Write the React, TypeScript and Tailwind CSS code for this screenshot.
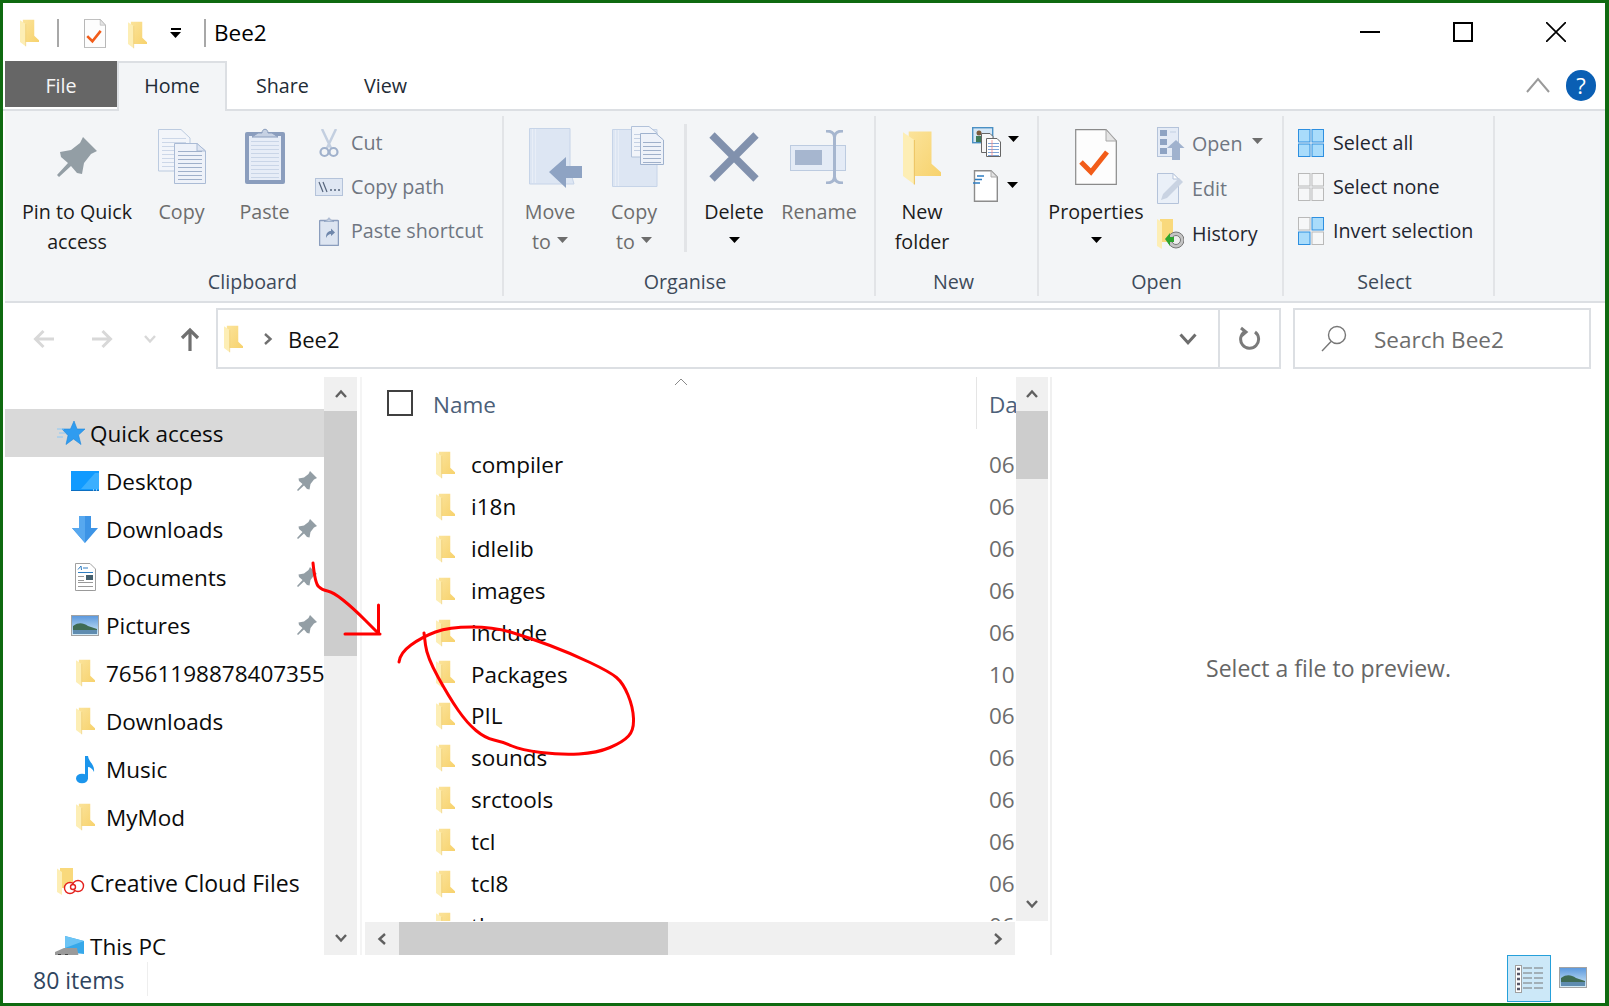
import React from "react";

const Folder = ({ w = 19, h = 28 }: { w?: number; h?: number }) => (
  <svg width={w} height={h} viewBox="0 0 20 28" className="shrink-0">
    <defs>
      <linearGradient id="fg" x1="0" y1="0" x2="1" y2="1">
        <stop offset="0" stopColor="#fbe39a" />
        <stop offset="1" stopColor="#f7d26d" />
      </linearGradient>
    </defs>
    <path d="M3 0H15V17L20 21.500V23.500H3Z" fill="url(#fg)" />
    <path d="M0 0.500L6 4.500V28L0 23.500Z" fill="#fdeeb5" />
    <path d="M6 4.500V28" stroke="#eec767" strokeWidth="0.6" />
  </svg>
);

const PinIcon = ({ s = 40 }: { s?: number }) => (
  <svg width={s} height={s} viewBox="0 0 40 40" className="shrink-0">
    <path d="M26 0L40 14L34 17L27 26L25 37L20 36L14 29L2 40L0 38L11 26L4 20L3 15L14 13L23 6Z" fill="#939ea5" />
  </svg>
);

const DocCheck = ({ w = 42, h = 56 }: { w?: number; h?: number }) => (
  <svg width={w} height={h} viewBox="0 0 42 56" className="shrink-0">
    <path d="M.7.7H31L41.300 12V55.300H.7Z" fill="#fdfdfd" stroke="#8a8a8a" strokeWidth="1.200" />
    <path d="M31 .7V12H41.300Z" fill="#e4e4e4" stroke="#a8a8a8" />
    <path d="M6 33L16 43L32 23" fill="none" stroke="#f25c19" strokeWidth="5" />
  </svg>
);

const Lines = ({ x, y, w, n, gap = 4, c = "#a9b7cf" }: { x: number; y: number; w: number; n: number; gap?: number; c?: string }) => (
  <g stroke={c} strokeWidth="1">
    {Array.from({ length: n }).map((_, i) => (
      <path key={i} d={`M${x} ${y + i * gap + 0.5}H${x + w}`} />
    ))}
  </g>
);

const CopyIcon = () => (
  <svg width="48" height="56" viewBox="0 0 48 56" className="shrink-0">
    <path d="M.5.500H23L32 9V42H.5Z" fill="#f2f5fa" stroke="#bccbe0" />
    <Lines x={4} y={9} w={24} n={8} c="#ccd7e8" />
    <path d="M16.500 14.500H39L47.500 22V54.500H16.500Z" fill="#eef2f9" stroke="#aabbd5" />
    <path d="M39 14.500V22H47.500Z" fill="#dfe6f2" stroke="#aabbd5" />
    <Lines x={20} y={22} w={24} n={8} c="#9fb0ca" />
  </svg>
);

const PasteIcon = () => (
  <svg width="40" height="58" viewBox="0 0 40 58" className="shrink-0">
    <rect x="0" y="5" width="40" height="52" rx="2" fill="#8a9dbd" />
    <rect x="4" y="9" width="32" height="44" fill="#e7edf7" />
    <Lines x={6} y={14} w={28} n={10} c="#c9d5e7" />
    <path d="M7 10L13 6H17C17 1 23 1 23 6H27L33 10Z" fill="#c6d1e3" stroke="#8a9dbd" />
  </svg>
);

const Scissors = () => (
  <svg width="20" height="29" viewBox="0 0 20 29" className="shrink-0">
    <path d="M3 0L12 19M17 0L8 19" stroke="#c3cfe0" strokeWidth="2.500" fill="none" />
    <circle cx="5.500" cy="23" r="4" fill="none" stroke="#a0b1cc" strokeWidth="2.200" />
    <circle cx="14.500" cy="23" r="4" fill="none" stroke="#a0b1cc" strokeWidth="2.200" />
  </svg>
);

const CopyPathIcon = () => (
  <svg width="28" height="18" viewBox="0 0 28 18" className="shrink-0">
    <rect x=".5" y=".5" width="27" height="17" fill="#dfe7f3" stroke="#b4c3da" />
    <path d="M4 4L8 14M8 4L12 14" stroke="#56657c" strokeWidth="1.200" />
    <path d="M15 12h2M19 12h2M23 12h2" stroke="#56657c" strokeWidth="1.500" />
  </svg>
);

const PasteShortcutIcon = () => (
  <svg width="20" height="29" viewBox="0 0 20 29" className="shrink-0">
    <rect x=".5" y="3.500" width="19" height="25" rx="1" fill="#dde5f1" stroke="#8a9dbd" strokeWidth="1.500" />
    <path d="M5 4.500L8 3H9C9 0 11 0 11 3H12L15 4.500Z" fill="#c6d1e3" stroke="#8a9dbd" strokeWidth=".6" />
    <path d="M7 21C7 16 9 14 12 14V11.500L16 15.500L12 19V17C10 17 8.500 18 7 21Z" fill="#6f87ab" />
  </svg>
);

const MoveIcon = () => (
  <svg width="54" height="60" viewBox="0 0 54 60" className="shrink-0">
    <path d="M.5.500H41V42L45 56H.5Z" fill="#dde6f3" stroke="#c6d4e8" />
    <path d="M3.500 1V55M6.500 1V55" stroke="#e8eef7" />
    <path d="M20 44L37 29V38H53V50H37V60Z" fill="#8ea3c3" />
  </svg>
);

const CopyToIcon = () => (
  <svg width="52" height="62" viewBox="0 0 52 62" className="shrink-0">
    <path d="M.5 3.500H45V60.500H.5Z" fill="#dde6f3" stroke="#c6d4e8" />
    <path d="M3.500 4V60M6.500 4V60" stroke="#e8eef7" />
    <path d="M19.500.5H37L45 7V31H19.500Z" fill="#f2f5fa" stroke="#b2c2da" />
    <Lines x={22} y={8} w={20} n={5} c="#c4d0e3" />
    <path d="M28.500 7.500H44L51.500 14V38.500H28.500Z" fill="#eef2f9" stroke="#9fb2ce" />
    <Lines x={31} y={16} w={18} n={6} c="#9fb0ca" />
  </svg>
);

const DeleteIcon = () => (
  <svg width="50" height="50" viewBox="0 0 50 50" className="shrink-0">
    <path d="M3 3L47 47M47 3L3 47" stroke="#8191ad" strokeWidth="7.500" />
  </svg>
);

const RenameIcon = () => (
  <svg width="58" height="54" viewBox="0 0 58 54" className="shrink-0">
    <rect x=".5" y="15.500" width="55" height="25" fill="#e4ebf6" stroke="#bccbe0" />
    <rect x="5" y="20" width="27" height="15" fill="#a6b6cf" />
    <path d="M36 1C42 1 44 3 44.500 7V47C44 51 42 53 36 53M53 1C47 1 45 3 44.500 7M44.500 47C45 51 47 53 53 53" fill="none" stroke="#a6b6cf" strokeWidth="3" />
  </svg>
);

const NewItemIcon = () => (
  <svg width="29" height="30" viewBox="0 0 29 30" className="shrink-0">
    <rect x=".7" y=".7" width="20" height="15" fill="#d6e7f5" stroke="#4a90c4" strokeWidth="1.400" />
    <circle cx="7" cy="6" r="2.500" fill="#7b5a3c" />
    <rect x="4" y="9" width="6" height="6" fill="#3e7a58" />
    <path d="M9.500 6.500H18L21 9.500V25.500H9.500Z" fill="#f7f7f7" stroke="#666" />
    <path d="M14.500 11.500H25L28.500 15V29.500H14.500Z" fill="#fff" stroke="#666" />
    <Lines x={16} y={16} w={11} n={5} gap={3} c="#7da3d6" />
    <path d="M20 13V29" stroke="#e88" strokeWidth=".8" />
  </svg>
);

const EasyIcon = () => (
  <svg width="26" height="32" viewBox="0 0 26 32" className="shrink-0">
    <path d="M2.500.7H19L25.300 7V31.300H2.500Z" fill="#fff" stroke="#8c8c8c" strokeWidth="1.400" />
    <path d="M19 .7V7H25.300Z" fill="#e2e2e2" stroke="#aaa" />
    <path d="M5 6h7M3 9.500h7M1 13h7" stroke="#2f7dc1" strokeWidth="1.500" />
  </svg>
);

const OpenIcon = () => (
  <svg width="28" height="33" viewBox="0 0 28 33" className="shrink-0">
    <rect x=".5" y=".5" width="21" height="29" fill="#e4ebf6" stroke="#b4c3da" />
    <rect x="3" y="3" width="7" height="6" fill="#8ea3c3" />
    <rect x="3" y="12" width="7" height="6" fill="#8ea3c3" />
    <rect x="3" y="21" width="7" height="6" fill="#8ea3c3" />
    <path d="M13 5h6" stroke="#c3d0e3" />
    <path d="M10 21L19 13L27.500 21H23V33H15V21Z" fill="#a0b2ce" />
  </svg>
);

const EditIcon = () => (
  <svg width="27" height="31" viewBox="0 0 27 31" className="shrink-0">
    <path d="M.5.500H16L21.500 6V30.500H.5Z" fill="#eaf0f8" stroke="#b4c3da" />
    <path d="M16 .5V6H21.500Z" fill="#fff" stroke="#b4c3da" />
    <path d="M4 27L6 21L22 5L26 9L10 25Z" fill="#c9d3e2" />
  </svg>
);

const HistoryIcon = () => (
  <svg width="27" height="31" viewBox="0 0 27 31" className="shrink-0">
    <path d="M3 1H16V18L21 24H3Z" fill="#f9d97c" />
    <path d="M0 1L5 4V31L0 28Z" fill="#fdeeb5" />
    <circle cx="19" cy="22" r="8" fill="#c4c4c4" stroke="#777" />
    <circle cx="19" cy="22" r="4.500" fill="#eee" stroke="#777" />
    <path d="M8 21L13 15V19H17V24H13V28Z" fill="#2ea52e" />
  </svg>
);

const Grid4 = ({ on }: { on: boolean[] }) => (
  <svg width="26" height="28" viewBox="0 0 26 28" className="shrink-0">
    {[
      [0, 0],
      [13.500, 0],
      [0, 14.500],
      [13.500, 14.500],
    ].map(([x, y], i) => (
      <rect
        key={i}
        x={x + 0.5}
        y={y + 0.5}
        width="11.500"
        height="12.500"
        fill={on[i] ? "#a9dcfb" : "#f6f7f8"}
        stroke={on[i] ? "#2d8fe0" : "#b9b9b9"}
      />
    ))}
  </svg>
);

const Caret = ({ c = "#000" }: { c?: string }) => (
  <svg width="11" height="6" viewBox="0 0 11 6" className="block shrink-0">
    <path d="M0 0H11L5.500 6Z" fill={c} />
  </svg>
);

const UpCaret = ({ c = "#000" }: { c?: string }) => (
  <div className="-mt-[5px]">
    <Caret c={c} />
  </div>
);

const Large = ({
  w,
  top,
  dx = 0,
  icon,
  lines,
  dim,
}: {
  w: number;
  top: number;
  dx?: number;
  icon: React.ReactNode;
  lines: React.ReactNode[];
  dim?: boolean;
}) => (
  <div className="flex flex-col items-center shrink-0" style={{ width: w }}>
    <div className="h-[74px] flex justify-center" style={{ paddingTop: top, paddingLeft: dx }}>
      {icon}
    </div>
    <div className={`flex flex-col items-center leading-[30px] whitespace-nowrap ${dim ? "text-[#6d6d6d]" : "text-[#1b1b1b]"}`}>
      {lines.map((l, i) => (
        <div key={i} className="flex items-center h-[30px] gap-[6px]">
          {l}
        </div>
      ))}
    </div>
  </div>
);

const Small = ({
  icon,
  text,
  dim,
  h = 44,
  iw = 36,
  extra,
}: {
  icon: React.ReactNode;
  text: string;
  dim?: boolean;
  h?: number;
  iw?: number;
  extra?: React.ReactNode;
}) => (
  <div className="flex items-center" style={{ height: h }}>
    <div className="flex justify-center shrink-0 pr-[8px]" style={{ width: iw }}>
      {icon}
    </div>
    <span className={dim ? "text-[#6f7681] whitespace-nowrap" : "text-[#1f2630] whitespace-nowrap"}>{text}</span>
    {extra}
  </div>
);

const Group = ({
  w,
  label,
  shift = 0,
  children,
}: {
  w: number;
  label: string;
  shift?: number;
  children: React.ReactNode;
}) => (
  <div className="h-[180px] mt-[5px] pt-[7px] border-r-2 border-[#e2e4e7] flex flex-col shrink-0" style={{ width: w }}>
    <div className="h-[144px] flex">{children}</div>
    <div className="h-[29px] text-center leading-[29px] text-[#3d4a5a]" style={{ paddingRight: shift }}>
      {label}
    </div>
  </div>
);

const Star = () => (
  <svg width="28" height="24" viewBox="0 0 28 24" className="shrink-0">
    <path d="M17 0L20 8H28L21.500 14L24 23.500L16.500 18L9 23.500L11 14.500L5 8H13.500Z" fill="#2f9cf0" stroke="#1c86dc" strokeWidth=".6" />
    <path d="M0 8H7M2 12H8M0 16H6" stroke="#8cc8f5" strokeWidth="1" />
  </svg>
);

const Desktop = () => (
  <svg width="28" height="20" viewBox="0 0 28 20" className="shrink-0">
    <rect width="28" height="20" fill="#109aff" />
    <path d="M10 18L24 2H28V18Z" fill="#3aafff" />
    <path d="M0 19.500H28" stroke="#0b6fc2" />
    <path d="M22 19h1M25 19h1" stroke="#fff" />
  </svg>
);

const Download = () => (
  <svg width="26" height="27" viewBox="0 0 26 27" className="shrink-0">
    <path d="M7 0H19V12H26L13 27L0 12H7Z" fill="#3d94e6" />
    <path d="M7 0H13V27L0 12H7Z" fill="#57a8ef" />
  </svg>
);

const DocIcon = () => (
  <svg width="21" height="28" viewBox="0 0 21 28" className="shrink-0">
    <path d="M.5.500H15L20.500 6V27.500H.5Z" fill="#fff" stroke="#a0a0a0" />
    <path d="M3 6.500L6 3L6.500 7" stroke="#2f7dc1" fill="none" />
    <path d="M8 5h5M3 9.500h15" stroke="#2f7dc1" />
    <rect x="11" y="12" width="7" height="5" fill="#45606e" />
    <Lines x={3} y={13} w={6} n={2} c="#999" />
    <Lines x={3} y={19} w={15} n={3} c="#999" />
  </svg>
);

const Picture = () => (
  <svg width="28" height="21" viewBox="0 0 28 21" className="shrink-0">
    <defs>
      <linearGradient id="sky" x1="0" y1="0" x2="0" y2="1">
        <stop offset="0" stopColor="#5a97dd" />
        <stop offset="1" stopColor="#d8eef8" />
      </linearGradient>
    </defs>
    <rect x=".5" y=".5" width="27" height="20" fill="url(#sky)" stroke="#a3a3a3" />
    <path d="M2 11C8 7 12 8 17 11L26 14V15H2Z" fill="#3f6b54" />
    <rect x="2" y="15" width="24" height="4" fill="#5f8cb0" />
  </svg>
);

const Music = () => (
  <svg width="19" height="29" viewBox="0 0 19 29" className="shrink-0">
    <ellipse cx="6" cy="23.500" rx="6" ry="4.800" fill="#1b95ec" />
    <path d="M9 1H12C12.500 7 19 9 18 17C17 14 14 12 12 12V24H9Z" fill="#1b95ec" />
  </svg>
);

const CCFolder = () => (
  <svg width="28" height="28" viewBox="0 0 28 28" className="shrink-0">
    <path d="M3 0H16V20H3Z" fill="#f9d97c" />
    <path d="M0 0.500L5 4V27L0 24Z" fill="#fdeeb5" />
    <g fill="#fff" stroke="#e3211d" strokeWidth="1.400">
      <circle cx="13" cy="20" r="5.500" />
      <circle cx="21" cy="18" r="5.500" />
      <circle cx="16" cy="19" r="2.500" />
    </g>
  </svg>
);

const PC = () => (
  <svg width="30" height="24" viewBox="0 0 30 24" className="shrink-0">
    <path d="M10 2L29 7V20L10 18Z" fill="#36a8ea" />
    <path d="M10 2L29 7L10 14Z" fill="#6cc4f5" />
    <path d="M0 18L9 14H22L24 24H0Z" fill="#9a9a9a" />
    <rect x="3" y="20" width="3" height="3" fill="#444" />
    <rect x="10" y="20" width="3" height="3" fill="#444" />
  </svg>
);

const Chev = ({ dir, c = "#606060", s = 12, sw = 2.400 }: { dir: "u" | "d" | "l" | "r"; c?: string; s?: number; sw?: number }) => {
  const d = {
    u: "M1 9L6 3.500L11 9",
    d: "M1 3L6 8.500L11 3",
    l: "M9 1L3.500 6L9 11",
    r: "M3 1L8.500 6L3 11",
  }[dir];
  return (
    <svg width={s} height={s} viewBox="0 0 12 12" className="shrink-0">
      <path d={d} fill="none" stroke={c} strokeWidth={sw} />
    </svg>
  );
};

const Arrow = ({ c, w = 22, left }: { c: string; w?: number; left?: boolean }) => (
  <svg width={w} height="20" viewBox="0 0 22 20" className={left ? "shrink-0" : "shrink-0 rotate-180"}>
    <path d="M21 10H3M10.500 2L2.500 10L10.500 18" fill="none" stroke={c} strokeWidth="3" />
  </svg>
);

const nav: { t: string; i: React.ReactNode; pin?: boolean }[] = [
  { t: "Desktop", i: <Desktop />, pin: true },
  { t: "Downloads", i: <Download />, pin: true },
  { t: "Documents", i: <DocIcon />, pin: true },
  { t: "Pictures", i: <Picture />, pin: true },
  { t: "76561198878407355", i: <Folder /> },
  { t: "Downloads", i: <Folder /> },
  { t: "Music", i: <Music /> },
  { t: "MyMod", i: <Folder /> },
];

const files: [string, string][] = [
  ["compiler", "06"],
  ["i18n", "06"],
  ["idlelib", "06"],
  ["images", "06"],
  ["include", "06"],
  ["Packages", "10"],
  ["PIL", "06"],
  ["sounds", "06"],
  ["srctools", "06"],
  ["tcl", "06"],
  ["tcl8", "06"],
  ["the", "06"],
];

const smooth = (p: number[][]) => {
  let d = `M${p[0][0]} ${p[0][1]}`;
  for (let i = 1; i < p.length - 1; i++) {
    const mx = (p[i][0] + p[i + 1][0]) / 2;
    const my = (p[i][1] + p[i + 1][1]) / 2;
    d += ` Q${p[i][0]} ${p[i][1]} ${mx} ${my}`;
  }
  const l = p[p.length - 1];
  return d + ` L${l[0]} ${l[1]}`;
};

const circlePts = [
  [399, 662], [400, 653], [422, 637], [449, 627], [494, 627], [530, 638], [570, 653], [610, 672], [623, 683],
  [633, 707], [634, 730], [623, 742], [597, 753], [561, 755], [521, 750], [503, 742], [485, 738], [467, 723],
  [449, 697], [427, 657], [424, 633],
];
const arrowPts = [[313, 563], [315, 583], [322, 590], [333, 592], [353, 608], [378, 633]];

export default function App() {
  return (
    <div className="relative w-[1609px] h-[1006px] overflow-hidden bg-white text-[19.700px] font-['Open_Sans',sans-serif]">
      <div className="w-full h-full border-t-[3px] border-l-[3px] border-b-[3px] border-r-[4px] border-[#0f6a10] flex flex-col">
        {/* title bar */}
        <div className="h-[58px] shrink-0 flex items-center pl-[17px] pr-[39px]">
          <div className="flex items-center mt-[2px]">
            <Folder w={19} h={28} />
            <div className="w-[2px] h-[28px] bg-[#a8a8a8] ml-[18px]" />
            <div className="ml-[25px]">
              <DocCheck w={22} h={29} />
            </div>
            <div className="ml-[22px] mt-[4px]">
              <Folder w={19} h={28} />
            </div>
            <div className="ml-[23px] flex flex-col items-center gap-[2px]">
              <div className="w-[10px] h-[2px] bg-black" />
              <Caret />
            </div>
            <div className="w-[2px] h-[28px] bg-[#a8a8a8] ml-[23px]" />
            <div className="ml-[8px] text-[22.500px] text-black leading-none">Bee2</div>
          </div>
          <div className="ml-auto flex items-center gap-[73px]">
            <div className="w-[20px] h-[2px] bg-black" />
            <div className="w-[20px] h-[20px] border-2 border-black" />
            <svg width="20" height="20" viewBox="0 0 20 20">
              <path d="M0 0L20 20M20 0L0 20" stroke="#000" strokeWidth="1.700" />
            </svg>
          </div>
        </div>
        {/* tabs */}
        <div className="h-[50px] shrink-0 flex items-start pl-[2px] border-b-2 border-[#dcdfe3]">
          <div className="w-[112px] h-[46px] bg-[#666666] text-[#f5f5f5] flex items-center justify-center pt-[4px]">File</div>
          <div className="w-[110px] h-[50px] bg-[#f3f5f7] border-x-2 border-t-2 border-[#dcdfe3] text-[#222b36] flex items-center justify-center pb-[2px]">
            Home
          </div>
          <div className="ml-[29px] h-[46px] pt-[4px] flex items-center text-[#222b36]">Share</div>
          <div className="ml-[55px] h-[46px] pt-[4px] flex items-center text-[#222b36]">View</div>
          <div className="ml-auto h-[46px] pt-[2px] flex items-center gap-[16px] pr-[9px]">
            <svg width="24" height="16" viewBox="0 0 24 16">
              <path d="M1 15L12 2L23 15" fill="none" stroke="#9a9a9a" strokeWidth="2" />
            </svg>
            <div className="w-[30px] h-[31px] rounded-full bg-[#0a5fb4] text-white text-[22px] flex items-center justify-center">?</div>
          </div>
        </div>
        {/* ribbon */}
        <div className="h-[192px] shrink-0 ml-[2px] bg-[#f3f5f7] border-b-2 border-[#dcdfe3] flex items-start">
          <Group w={499} label="Clipboard" shift={2}>
            <Large w={144} top={14} icon={<PinIcon />} lines={["Pin to Quick", "access"]} />
            <Large w={65} top={6} dim icon={<CopyIcon />} lines={["Copy"]} />
            <Large w={101} top={4} dim icon={<PasteIcon />} lines={["Paste"]} />
            <div className="flex flex-col -mt-[2px]">
              <Small dim iw={36} icon={<Scissors />} text="Cut" />
              <Small dim iw={36} icon={<CopyPathIcon />} text="Copy path" />
              <Small dim iw={36} icon={<PasteShortcutIcon />} text="Paste shortcut" />
            </div>
          </Group>
          <Group w={372} label="Organise" shift={8}>
            <Large w={92} top={5} dx={12} dim icon={<MoveIcon />} lines={["Move", <>to <UpCaret c="#6d6d6d" /></>]} />
            <Large w={76} top={3} dx={8} dim icon={<CopyToIcon />} lines={["Copy", <>to <UpCaret c="#6d6d6d" /></>]} />
            <div className="w-[3px] h-[128px] mt-[1px] bg-[#e2e4e7] ml-[12px] shrink-0" />
            <Large w={94} top={9} icon={<DeleteIcon />} lines={["Delete", <UpCaret />]} />
            <Large w={76} top={7} dim icon={<RenameIcon />} lines={["Rename"]} />
          </Group>
          <Group w={163} label="New" shift={6}>
            <Large w={92} top={7} icon={<Folder w={38} h={56} />} lines={["New", "folder"]} />
            <div className="flex flex-col mt-[4px] ml-[4px]">
              <div className="h-[43px] flex items-start gap-[7px]">
                <NewItemIcon />
                <div className="mt-[9px]"><Caret /></div>
              </div>
              <div className="h-[45px] flex items-start gap-[9px]">
                <EasyIcon />
                <div className="mt-[12px]"><Caret /></div>
              </div>
            </div>
          </Group>
          <Group w={245} label="Open" shift={8}>
            <Large w={114} top={6} icon={<DocCheck />} lines={["Properties", <UpCaret />]} />
            <div className="flex flex-col -mt-[2px] ml-[4px]">
              <Small dim h={45} iw={35} icon={<OpenIcon />} text="Open" extra={<div className="ml-[9px] -mt-[6px]"><Caret c="#6d6d6d" /></div>} />
              <Small dim h={45} iw={35} icon={<EditIcon />} text="Edit" />
              <Small h={45} iw={35} icon={<HistoryIcon />} text="History" />
            </div>
          </Group>
          <Group w={211} label="Select" shift={8}>
            <div className="flex flex-col -mt-[2px] pl-[13px]">
              <Small iw={36} icon={<Grid4 on={[true, true, true, true]} />} text="Select all" />
              <Small iw={36} icon={<Grid4 on={[false, false, false, false]} />} text="Select none" />
              <Small iw={36} icon={<Grid4 on={[false, true, true, false]} />} text="Invert selection" />
            </div>
          </Group>
        </div>
        {/* address */}
        <div className="h-[74px] shrink-0 pt-[5px] flex items-start pl-[30px]">
          <div className="h-[61px] flex items-center">
            <Arrow left c="#d8d8d8" />
            <div className="ml-[36px]"><Arrow c="#d8d8d8" /></div>
            <div className="ml-[31px]"><Chev dir="d" c="#d8d8d8" /></div>
            <div className="ml-[24px]">
              <svg width="20" height="24" viewBox="0 0 20 24">
                <path d="M10 24V4M2 11L10 3L18 11" fill="none" stroke="#707070" strokeWidth="3.200" />
              </svg>
            </div>
          </div>
          <div className="ml-[16px] w-[1002px] h-[61px] border-2 border-[#dcdfe3] border-r-0 flex items-center pl-[6px] shrink-0">
            <Folder w={19} h={28} />
            <div className="ml-[19px]"><Chev dir="r" c="#707070" /></div>
            <div className="ml-[14px] mt-[2px] text-[22px] text-[#111]">Bee2</div>
            <div className="ml-auto mr-[21px]"><Chev dir="d" c="#6d6d6d" s={18} sw={2} /></div>
          </div>
          <div className="w-[63px] h-[61px] border-2 border-[#dcdfe3] flex items-center justify-center shrink-0">
            <svg width="22" height="26" viewBox="0 0 22 26">
              <path d="M6 5.500A9 9 0 1 0 16 6M2 2L7 6L2.500 10" fill="none" stroke="#7a7a7a" strokeWidth="3" />
            </svg>
          </div>
          <div className="ml-[12px] w-[298px] h-[61px] border-2 border-[#dcdfe3] flex items-center pl-[26px] shrink-0">
            <svg width="26" height="27" viewBox="0 0 26 27">
              <circle cx="16" cy="10" r="8.500" fill="none" stroke="#777" strokeWidth="1.400" />
              <path d="M10 16.500L1 26" stroke="#777" strokeWidth="1.400" />
            </svg>
            <span className="ml-[27px] mt-[2px] text-[22.500px] text-[#6d6d6d] whitespace-nowrap">Search Bee2</span>
          </div>
        </div>
        {/* main */}
        <div className="flex-1 min-h-0 flex ml-[2px] text-[22.500px]">
          {/* nav pane */}
          <div className="w-[319px] shrink-0 h-[578px] overflow-hidden pt-[32px] text-[#0b0b0b]">
            <div className="h-[48px] bg-[#d9d9d9] flex items-center pl-[52px] gap-[5px] whitespace-nowrap">
              <Star />
              <span className="mt-[2px]">Quick access</span>
            </div>
            {nav.map((n, i) => (
              <div key={i} className="h-[48px] flex items-center pl-[66px] whitespace-nowrap overflow-hidden">
                <div className="w-[28px] flex justify-center shrink-0">{n.i}</div>
                <span className="ml-[7px] mt-[2px]">{n.t}</span>
                {n.pin && (
                  <div className="ml-auto mr-[7px]">
                    <PinIcon s={20} />
                  </div>
                )}
              </div>
            ))}
            <div className="mt-[17px] h-[48px] flex items-center pl-[52px] gap-[5px] whitespace-nowrap">
              <CCFolder />
              <span className="mt-[2px] text-[23px]">Creative Cloud Files</span>
            </div>
            <div className="mt-[16px] h-[48px] flex items-center pl-[50px] gap-[5px] whitespace-nowrap">
              <PC />
              <span className="mt-[2px]">This PC</span>
            </div>
          </div>
          {/* nav scrollbar */}
          <div className="w-[33px] h-[578px] shrink-0 bg-[#f0f0f0] flex flex-col">
            <div className="h-[34px] flex items-center justify-center"><Chev dir="u" /></div>
            <div className="h-[245px] bg-[#cdcdcd]" />
            <div className="flex-1" />
            <div className="h-[34px] flex items-center justify-center"><Chev dir="d" /></div>
          </div>
          <div className="w-[8px] h-[578px] shrink-0 flex justify-center">
            <div className="w-[2px] h-full bg-[#f4f4f4]" />
          </div>
          {/* file pane */}
          <div className="w-[687px] h-[578px] shrink-0 border-r-2 border-[#f0f0f0] flex flex-col">
            <div className="h-[545px] flex shrink-0">
              <div className="w-[651px] h-[544px] overflow-hidden shrink-0 relative">
                <div className="h-[52px] flex items-center pl-[22px] relative">
                  <div className="w-[26px] h-[26px] border-2 border-[#404040] shrink-0" />
                  <span className="ml-[20px] text-[#4c6079] w-[543px] shrink-0 mt-[3px]">Name</span>
                  <div className="w-[1px] h-[52px] bg-[#e5e5e5] shrink-0" />
                  <span className="ml-[12px] text-[#4c6079] whitespace-nowrap mt-[3px]">Date modified</span>
                  <svg width="14" height="8" viewBox="0 0 14 8" className="absolute left-[309px] top-[1px]">
                    <path d="M1 7L7 1L13 7" fill="none" stroke="#8a8a8a" strokeWidth="1" />
                  </svg>
                </div>
                <div className="pt-[15px]">
                  {files.map(([n, d]) => (
                    <div key={n} className="h-[41.900px] flex items-center pl-[71px]">
                      <div className="w-[553px] shrink-0 flex items-center gap-[16px]">
                        <Folder />
                        <span className="text-[#0b0b0b]">{n}</span>
                      </div>
                      <span className="text-[#6d6d6d]">{d}</span>
                    </div>
                  ))}
                </div>
              </div>
              <div className="w-[32px] h-[544px] shrink-0 bg-[#f0f0f0] flex flex-col">
                <div className="h-[34px] flex items-center justify-center"><Chev dir="u" /></div>
                <div className="h-[68px] bg-[#cdcdcd]" />
                <div className="flex-1" />
                <div className="h-[34px] flex items-center justify-center"><Chev dir="d" /></div>
              </div>
            </div>
            <div className="w-[650px] h-[33px] bg-[#f0f0f0] flex items-center">
              <div className="w-[34px] flex justify-center"><Chev dir="l" /></div>
              <div className="w-[269px] h-full bg-[#cdcdcd]" />
              <div className="ml-auto w-[34px] flex justify-center"><Chev dir="r" /></div>
            </div>
          </div>
          {/* preview */}
          <div className="flex-1 h-[578px] flex items-center justify-center pt-[4px] text-[#666666] text-[23px]">Select a file to preview.</div>
        </div>
        {/* status */}
        <div className="h-[48px] shrink-0 flex items-center pl-[30px] text-[23px]">
          <span className="text-[#2f4560] pt-[2px]">80 items</span>
          <div className="w-[1px] h-[34px] bg-[#eeeeee] ml-[23px]" />
          <div className="ml-auto flex items-start h-full pr-[18px]">
            <div className="w-[44px] h-[47px] bg-[#cce8f8] border border-[#26a0da] flex items-center justify-center">
              <svg width="28" height="28" viewBox="0 0 28 28">
                <rect x=".5" y=".5" width="6" height="27" fill="#fff" stroke="#a0a0a0" />
                <path d="M2 4h3M2 9h3M2 14h3M2 19h3M2 24h3" stroke="#556" strokeWidth="2.500" />
                <path d="M8 3h9M19 3h9M8 8h9M19 8h9M8 13h9M19 13h9M8 18h9M19 18h9M8 23h9M19 23h9" stroke="#777" strokeWidth="1" />
              </svg>
            </div>
            <div className="ml-[8px] mt-[12px]">
              <Picture />
            </div>
          </div>
        </div>
      </div>
      {/* hand-drawn annotation */}
      <svg width="1609" height="1006" viewBox="0 0 1609 1006" className="absolute inset-0 pointer-events-none">
        <g fill="none" stroke="#ff0000" strokeWidth="3" strokeLinecap="round" strokeLinejoin="round">
          <path d={smooth(circlePts)} />
          <path d={smooth(arrowPts)} />
          <path d="M378.500 605V634M345 634H380" />
        </g>
      </svg>
    </div>
  );
}
